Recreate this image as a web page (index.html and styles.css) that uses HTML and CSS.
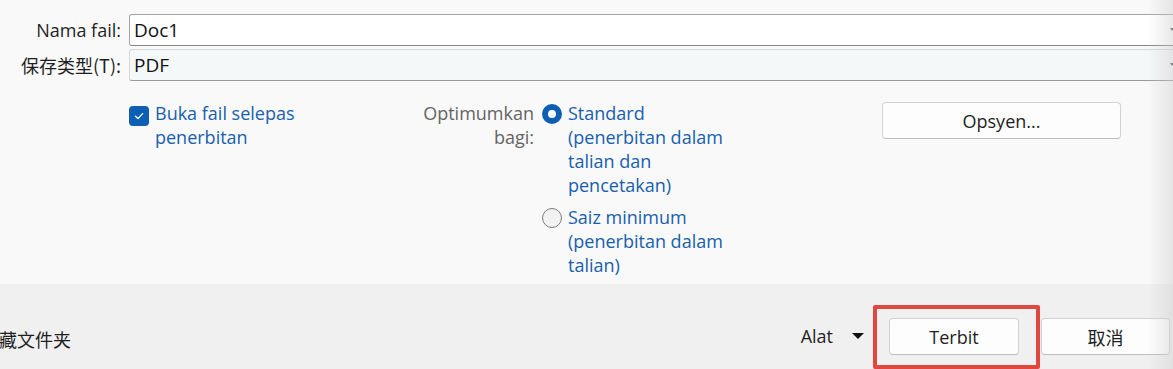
FILE: index.html
```html
<!DOCTYPE html>
<html lang="ms">
<head>
  <meta charset="UTF-8">
  <meta name="viewport" content="width=device-width, initial-scale=1.0">
  <title>Terbit sebagai PDF</title>
  <link rel="stylesheet" href="styles.css">
</head>
<body>
  <div class="dialog">
    <div class="top">
      <div class="fields">
        <label class="field-label" for="filename">Nama fail:</label>
        <div class="field field-name">
          <input type="text" id="filename" value="Doc1">
          <span class="combo-arrow"></span>
        </div>
        <label class="field-label cjk" for="filetype">保存类型(T):</label>
        <div class="field field-type">
          <span id="filetype" class="field-value">PDF</span>
          <span class="combo-arrow"></span>
        </div>
      </div>

      <div class="options">
        <div class="open-after">
          <span class="checkbox checked">
            <svg width="12" height="12" viewBox="0 0 12 12"><path d="M2.5 6.3 L5 8.6 L9.6 3.6" fill="none" stroke="#fff" stroke-width="1.3" stroke-linecap="round" stroke-linejoin="round"/></svg>
          </span>
          <span class="blue-text">Buka fail selepas penerbitan</span>
        </div>

        <div class="optimize-label">Optimumkan bagi:</div>

        <div class="radio-list">
          <div class="radio-item">
            <span class="radio selected"></span>
            <span class="blue-text">Standard (penerbitan dalam talian dan pencetakan)</span>
          </div>
          <div class="radio-item">
            <span class="radio"></span>
            <span class="blue-text">Saiz minimum (penerbitan dalam talian)</span>
          </div>
        </div>

        <button class="btn btn-options" type="button">Opsyen...</button>
      </div>
    </div>

    <div class="bottom">
      <span class="hide-folders cjk">藏文件夹</span>
      <div class="actions">
        <span class="tools">Alat <span class="tools-arrow"></span></span>
        <div class="highlight">
          <button class="btn btn-action" type="button">Terbit</button>
        </div>
        <button class="btn btn-action cjk" type="button">取消</button>
      </div>
    </div>

    <div class="edge-shade"></div>
  </div>
</body>
</html>
```

FILE: styles.css
```css
body {
    margin: 0;
    font-family: "Open Sans", "Noto Sans CJK SC", sans-serif;
    font-size: 18px;
    color: #1f1f1f;
    overflow: hidden;
}

.cjk {
    font-family: "Noto Sans CJK SC", "Open Sans", sans-serif;
}

.dialog {
    position: relative;
    width: 1173px;
    height: 369px;
    overflow: hidden;
}

.top {
    height: 284px;
    background-color: #f9f9f9;
    padding-top: 14px;
    box-sizing: border-box;
}

/* file name + type */
.fields {
    display: grid;
    grid-template-columns: 121px 1060px;
    column-gap: 8px;
    row-gap: 3px;
}

.field-label {
    text-align: right;
    line-height: 32px;
    font-size: 18px;
    color: #1f1f1f;
    white-space: nowrap;
}

.field {
    position: relative;
    height: 32px;
    box-sizing: border-box;
    display: flex;
    align-items: center;
    padding-left: 4px;
    font-size: 19px;
}

.field-name {
    background-color: #fff;
    border: 1px solid #a3a3a3;
    border-bottom-color: #868686;
    border-radius: 3px;
}

.field-name input {
    border: none;
    outline: none;
    background: transparent;
    font-family: inherit;
    font-size: 19px;
    color: #111;
    padding: 0;
    width: 300px;
}

.field-type {
    background-color: #f5f8f9;
    border: 1px solid #d4d8da;
    border-bottom-color: #9a9a9a;
    border-radius: 3px;
    color: #111;
}

.combo-arrow {
    position: absolute;
    left: 1040px;
    top: 13px;
    border-left: 2px solid transparent;
    border-right: 2px solid transparent;
    border-top: 3px solid #555;
}

/* options row */
.options {
    display: flex;
    align-items: flex-start;
    margin-top: 20px;
    padding-left: 129px;
    line-height: 24px;
}

.open-after {
    display: flex;
    align-items: flex-start;
    gap: 6px;
    width: 291px;
}

.blue-text {
    color: #1760ad;
}

.open-after .blue-text {
    width: 160px;
}

.checkbox {
    flex: none;
    width: 20px;
    height: 20px;
    margin-top: 5px;
    border-radius: 4px;
    box-sizing: border-box;
    display: flex;
    align-items: center;
    justify-content: center;
}

.checkbox.checked {
    background-color: #0d5fb3;
}

.optimize-label {
    width: 114px;
    text-align: right;
    color: #646464;
}

.radio-list {
    margin-left: 8px;
    width: 340px;
    display: flex;
    flex-direction: column;
    gap: 8px;
}

.radio-item {
    display: flex;
    align-items: flex-start;
    gap: 6px;
}

.radio-item .blue-text {
    width: 168px;
}

.radio {
    flex: none;
    width: 20px;
    height: 20px;
    margin-top: 3px;
    border-radius: 50%;
    box-sizing: border-box;
    border: 1px solid #7d7d7d;
    background-color: #f2f2f2;
}

.radio.selected {
    border: 6px solid #0d5fb3;
    background-color: #fff;
}

.btn {
    font-family: inherit;
    font-size: 18px;
    color: #1f1f1f;
    background-color: #fdfdfd;
    border: 1px solid #d2d2d2;
    border-bottom-color: #bdbdbd;
    border-radius: 4px;
    cursor: pointer;
    padding: 0;
}

.btn.cjk {
    font-family: "Noto Sans CJK SC", sans-serif;
}

.btn-options {
    width: 239px;
    height: 37px;
    margin-top: 1px;
}

/* bottom bar */
.bottom {
    height: 85px;
    background-color: #f0f0f0;
    display: flex;
    align-items: flex-start;
    padding-top: 21px;
    box-sizing: border-box;
}

.hide-folders {
    margin-top: 20px;
    margin-left: -1px;
    font-size: 18px;
    line-height: 28px;
}

.actions {
    margin-left: auto;
    display: flex;
    align-items: flex-start;
}

.tools {
    display: flex;
    align-items: center;
    height: 62px;
    margin-right: 9px;
    font-size: 18px;
}

.tools-arrow {
    margin-left: 19px;
    border-left: 6px solid transparent;
    border-right: 6px solid transparent;
    border-top: 6px solid #111;
}

.highlight {
    border: 4px solid #e0473e;
    border-radius: 2px;
    padding: 9px 17px 0 12px;
    box-sizing: border-box;
    height: 64px;
}

.btn-action {
    width: 130px;
    height: 37px;
    font-size: 18px;
}

.actions > .btn-action {
    margin-top: 13px;
    margin-left: 1px;
    margin-right: 3px;
    width: 129px;
}

.edge-shade {
    position: absolute;
    top: 0;
    right: 0;
    width: 26px;
    height: 100%;
    background: linear-gradient(to right, rgba(220, 220, 220, 0), rgba(205, 205, 205, 0.45));
    pointer-events: none;
}
```
